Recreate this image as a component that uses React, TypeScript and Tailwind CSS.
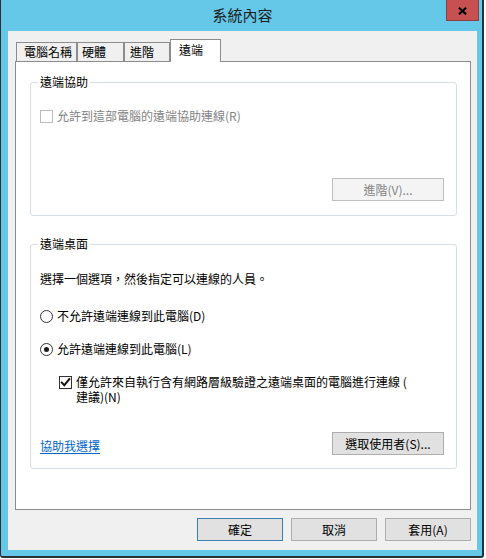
import React from "react";

function DisabledCheckbox() {
  return <span className="block w-[13px] h-[13px] shrink-0 border border-[#bcbcbc] bg-white" />;
}

function CheckedCheckbox() {
  return (
    <span className="relative block w-[13px] h-[13px] shrink-0 border border-[#333333] bg-white mt-[2px]">
      <svg width="11" height="11" viewBox="0 0 11 11" className="absolute left-0 top-0">
        <path d="M1.8 5.6 L4.3 8.2 L9.3 2.2" fill="none" stroke="#111" strokeWidth="2" strokeLinecap="square" />
      </svg>
    </span>
  );
}

function Radio({ checked }: { checked?: boolean }) {
  return (
    <span className="flex items-center justify-center w-[13px] h-[13px] shrink-0 rounded-full border border-[#333333] bg-white">
      {checked && <span className="block w-[5px] h-[5px] rounded-full bg-[#1a1a1a]" />}
    </span>
  );
}

function Btn({ children, w = "w-[86px]", def, disabled }: { children: React.ReactNode; w?: string; def?: boolean; disabled?: boolean }) {
  const cls = disabled
    ? "bg-[#f4f4f4] border-[#bfbfbf] text-[#838383]"
    : def
    ? "bg-[#e1e1e1] border-[#3c7fb1] text-black"
    : "bg-[#e1e1e1] border-[#adadad] text-black";
  return (
    <div className={`${w} h-[23px] shrink-0 border flex items-center justify-center leading-4 ${cls}`}>{children}</div>
  );
}

export default function App() {
  return (
    <div className="w-[486px] h-[559px] bg-white font-['Noto_Sans_CJK_TC','Noto_Sans',sans-serif] text-[12px] leading-4 text-black">
      <div className="relative w-[484px] h-[558px] bg-[#66c8e9] border-l border-r-2 border-b-2 border-[#2b3034] rounded-bl-[3px] rounded-br-[3px] flex flex-col pl-[7px] pr-[5px] pb-[6px]">
        {/* title bar */}
        <div className="h-[31px] shrink-0 flex items-center justify-center text-[15px] text-[#1b1f22] pb-px">系統內容</div>
        <div className="absolute top-0 right-[3px] w-[33px] h-[21px] bg-[#c75050] border border-t-0 border-[#8c3f3f] flex items-center justify-center pt-px">
          <svg width="9" height="8" viewBox="0 0 9 8">
            <path d="M1 0.8 L8 7.2 M8 0.8 L1 7.2" stroke="#000" strokeWidth="2.2" />
          </svg>
        </div>

        {/* client */}
        <div className="flex-1 bg-[#f0f0f0] flex flex-col pt-[8px]">
          {/* tabs */}
          <div className="h-[22px] ml-[8px] flex items-end">
            <div className="w-[61px] h-[19px] border border-b-0 border-[#8c8c8c] bg-[#f0f0f0] pl-[7px] pt-px">電腦名稱</div>
            <div className="w-[47px] h-[19px] border border-b-0 border-[#8c8c8c] bg-[#f0f0f0] pl-[4px] pt-px">硬體</div>
            <div className="w-[46px] h-[19px] border border-b-0 border-[#8c8c8c] bg-[#f0f0f0] pl-[5px] pt-px">進階</div>
            <div className="relative z-10 w-[51px] h-[23px] -mb-px border border-b-0 border-[#8c8c8c] bg-white pl-[8px] pt-[2px]">遠端</div>
          </div>

          {/* panel */}
          <div className="ml-[7px] w-[456px] h-[449px] shrink-0 bg-white border border-[#8c8c8c] flex flex-col">
            {/* group 1 */}
            <div className="relative mt-[20px] ml-[14px] w-[427px] h-[134px] shrink-0 border border-[#d5dfe5] rounded-[3px] flex flex-col">
              <span className="absolute left-[7px] top-[-9px] px-[2px] bg-white">遠端協助</span>
              <div className="mt-[25px] ml-[9px] h-4 flex items-center gap-[4px] text-[#838383]">
                <DisabledCheckbox />
                <span>允許到這部電腦的遠端協助連線(R)</span>
              </div>
              <div className="mt-auto self-end mr-[12px] mb-[14px]">
                <Btn w="w-[112px]" disabled>進階(V)...</Btn>
              </div>
            </div>

            {/* group 2 */}
            <div className="relative mt-[28px] ml-[14px] w-[427px] h-[225px] shrink-0 border border-[#d5dfe5] rounded-[3px] flex flex-col">
              <span className="absolute left-[7px] top-[-9px] px-[2px] bg-white">遠端桌面</span>
              <div className="mt-[26px] ml-[9px] h-4">選擇一個選項，然後指定可以連線的人員。</div>
              <div className="mt-[21px] ml-[9px] h-4 flex items-center gap-[4px]">
                <Radio />
                <span>不允許遠端連線到此電腦(D)</span>
              </div>
              <div className="mt-[17px] ml-[9px] h-4 flex items-center gap-[4px]">
                <Radio checked />
                <span>允許遠端連線到此電腦(L)</span>
              </div>
              <div className="mt-[17px] ml-[28px] flex items-start gap-[4px]">
                <CheckedCheckbox />
                <span className="leading-[15px]">
                  僅允許來自執行含有網路層級驗證之遠端桌面的電腦進行連線 (
                  <br />
                  建議)(N)
                </span>
              </div>
              <div className="mt-[28px] pl-[9px] pr-[12px] flex justify-between">
                <span className="self-end mb-px text-[#0066cc] underline underline-offset-2">協助我選擇</span>
                <Btn w="w-[112px]">選取使用者(S)...</Btn>
              </div>
            </div>
          </div>

          {/* bottom buttons */}
          <div className="mt-[8px] pr-[6px] flex justify-end gap-[8px]">
            <Btn def>確定</Btn>
            <Btn>取消</Btn>
            <Btn>套用(A)</Btn>
          </div>
        </div>
      </div>
    </div>
  );
}
